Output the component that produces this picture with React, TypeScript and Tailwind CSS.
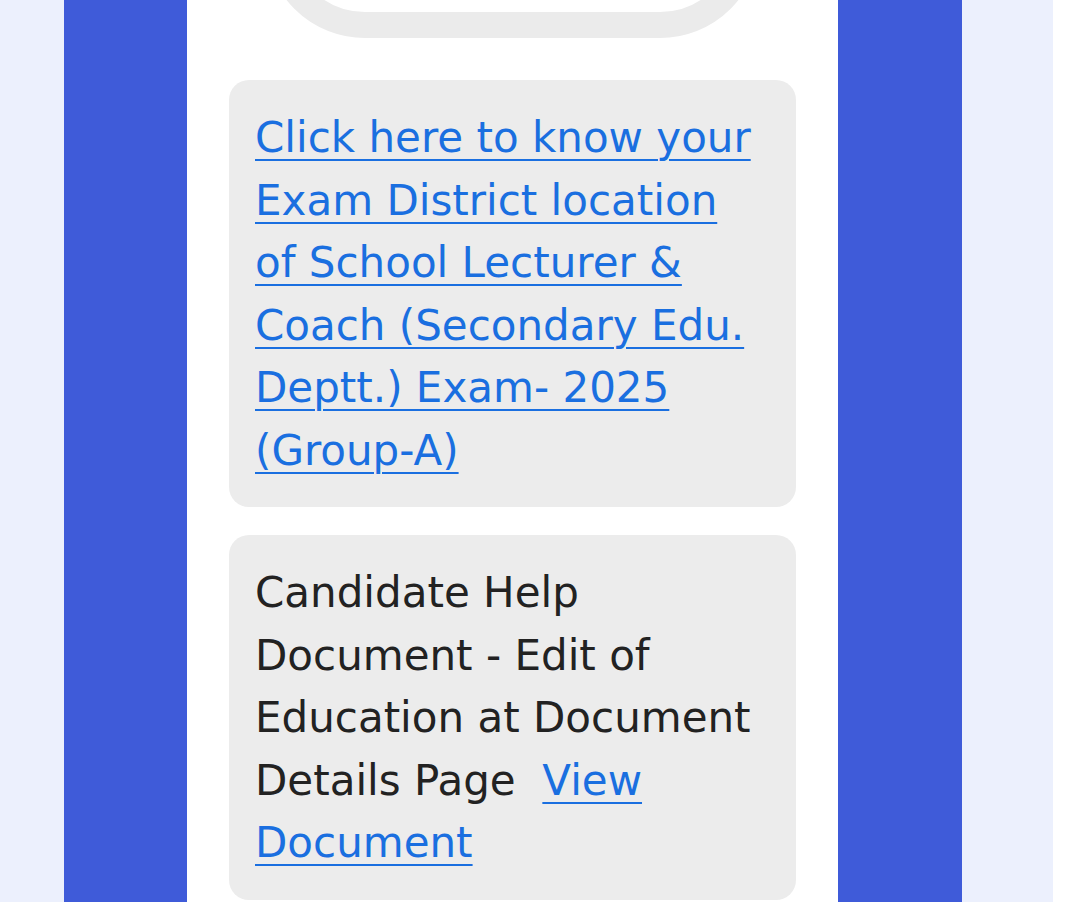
export default function App() {
  const font = { fontFamily: '"DejaVu Sans", "Noto Sans", sans-serif' }
  return (
    <div className="flex h-[902px] w-[1080px] overflow-hidden bg-white" style={font}>
      <div className="w-[64px] shrink-0 bg-[#ecf0fd]" />
      <div className="w-[123px] shrink-0 bg-[#3f5bd9]" />
      <div className="flex w-[651px] shrink-0 flex-col bg-white px-[42px]">
        {/* top decorative ring, mostly scrolled out of view */}
        <div className="mx-auto mt-[-162px] h-[200px] w-[495px] shrink-0 rounded-[110px] border-[26px] border-[#ebebeb]" />

        <div className="mt-[42px] shrink-0 rounded-[20px] bg-[#ececec] px-[26px] pt-[27px] pb-[25px] text-[42px] leading-[62.5px]">
          <a href="#" className="text-[#1a6fe0] underline decoration-[2px] underline-offset-[7px]">
            Click here to know your
            <br />
            Exam District location
            <br />
            of School Lecturer &amp;
            <br />
            Coach (Secondary Edu.
            <br />
            Deptt.) Exam- 2025
            <br />
            (Group-A)
          </a>
        </div>

        <div className="mt-[28px] shrink-0 rounded-[20px] bg-[#ececec] px-[26px] pt-[27px] pb-[25px] text-[42px] leading-[62.5px] text-[#222222]">
          Candidate Help
          <br />
          Document - Edit of
          <br />
          Education at Document
          <br />
          Details Page&nbsp;{' '}
          <a href="#" className="text-[#1a6fe0] underline decoration-[2px] underline-offset-[7px]">
            View
            <br />
            Document
          </a>
        </div>
      </div>
      <div className="w-[124px] shrink-0 bg-[#3f5bd9]" />
      <div className="w-[91px] shrink-0 bg-[#ecf0fd]" />
      <div className="flex-1 bg-white" />
    </div>
  )
}
